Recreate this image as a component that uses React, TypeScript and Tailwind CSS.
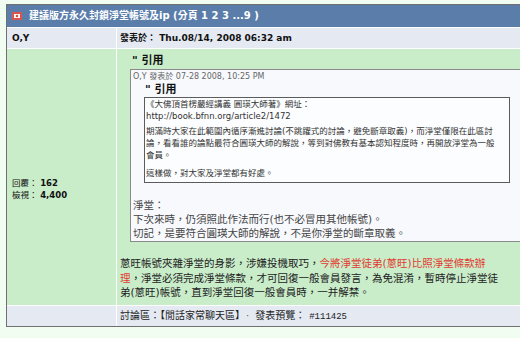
import React from 'react';

const FlagIcon = () => (
  <svg width="10" height="8" viewBox="0 0 10 8" className="shrink-0">
    <rect x="0" y="0" width="10" height="8" fill="#d8554f" />
    <rect x="2" y="2" width="6" height="4" fill="#ffffff" />
    <circle cx="5" cy="4" r="1.3" fill="#d8554f" />
  </svg>
);

export default function App() {
  return (
    <div className="w-[520px] h-[338px] overflow-hidden bg-[#f2fdf2] pt-[4px] pl-[6px] font-['DejaVu_Sans','Noto_Sans_CJK_TC',sans-serif] text-[#222]">
      <div className="w-[528px] border border-[#707070] bg-white flex flex-col gap-px">
        {/* title bar */}
        <div className="h-[22px] bg-[#5a7daa] flex items-center pl-[5px] gap-[7px]">
          <FlagIcon />
          <span className="text-white font-bold text-[10px] leading-none whitespace-nowrap">
            建議版方永久封鎖淨堂帳號及ip (分頁 1 2 3 ...9 )
          </span>
        </div>

        <div className="grid grid-cols-[109px_1fr] gap-px">
          {/* author row */}
          <div className="bg-[#e4e9f2] h-[20px] pl-[5px] text-[9px] font-bold leading-[20px] text-[#111]">O,Y</div>
          <div className="bg-[#e4e9f2] h-[20px] pl-[3px] text-[9px] font-bold leading-[20px] text-[#111] whitespace-nowrap">
            發表於： Thu.08/14, 2008 06:32 am
          </div>

          {/* post body */}
          <div className="bg-[#c9ecc9] pt-[128px] pl-[5px] text-[8.5px] leading-[12px] text-[#111]">
            <div>
              回覆： <b>162</b>
            </div>
            <div>
              檢視： <b>4,400</b>
            </div>
          </div>
          <div className="bg-[#c9ecc9] pt-[3px] pl-[3px] pr-[10px] pb-[5px]">
            <div className="ml-[10px]">
              <div className="pl-[2px] text-[11px] font-bold leading-[17px] text-[#111]">" 引用</div>
              <div className="border border-[#8a8a8a] bg-[#f7f9fd] pt-[1px] pb-[1px] pl-[2px]">
                <div className="text-[8px] leading-[11px] text-[#666] whitespace-nowrap">O,Y 發表於 07-28 2008, 10:25 PM</div>
                <div className="pl-[12px] text-[11px] font-bold leading-[15px] text-[#111]">" 引用</div>
                <div className="ml-[11px] mr-[12px] border border-[#5c5c5c] bg-[#fcfdfe] px-[1px] pb-[3px] text-[8.5px] leading-[12px] text-[#333]">
                  <p className="whitespace-nowrap">
                    《大佛頂首楞嚴經講義 圓瑛大師著》網址：
                    <br />
                    http://book.bfnn.org/article2/1472
                  </p>
                  <p className="mt-[3px] whitespace-nowrap">
                    期滿時大家在此範圍內循序漸進討論(不跳躍式的討論，避免斷章取義)，而淨堂僅限在此區討
                    <br />
                    論，看看誰的論點最符合圓瑛大師的解說，等到對佛教有基本認知程度時，再開放淨堂為一般
                    <br />
                    會員。
                  </p>
                  <p className="mt-[6px]">這樣做，對大家及淨堂都有好處。</p>
                </div>
                <div className="mt-[15px] text-[10.5px] leading-[14px] text-[#444]">
                  <p>淨堂：</p>
                  <p>下次來時，仍須照此作法而行(也不必冒用其他帳號)。</p>
                  <p>切記，是要符合圓瑛大師的解說，不是你淨堂的斷章取義。</p>
                </div>
              </div>
            </div>
            <p className="mt-[14px] text-[10.5px] leading-[14.5px] text-[#222] whitespace-nowrap">
              蔥旺帳號夾雜淨堂的身影，涉嫌投機取巧，
              <span className="text-[#e3392f]">
                今將淨堂徒弟(蔥旺)比照淨堂條款辦
                <br />理
              </span>
              ，淨堂必須完成淨堂條款，才可回復一般會員發言，為免混淆，暫時停止淨堂徒
              <br />
              弟(蔥旺)帳號，直到淨堂回復一般會員時，一并解禁。
            </p>
          </div>

          {/* footer row */}
          <div className="bg-[#e4e9f2] h-[20px]"></div>
          <div className="bg-[#e4e9f2] h-[20px] pl-[3px] text-[10px] leading-[20px] text-[#222] whitespace-nowrap">
            討論區：【閒話家常聊天區】<span className="mx-[6px] text-[#666]">·</span>發表預覽：
            <span className="ml-[4px] font-['Liberation_Mono',monospace] text-[9px]">#111425</span>
          </div>
        </div>
      </div>
    </div>
  );
}
